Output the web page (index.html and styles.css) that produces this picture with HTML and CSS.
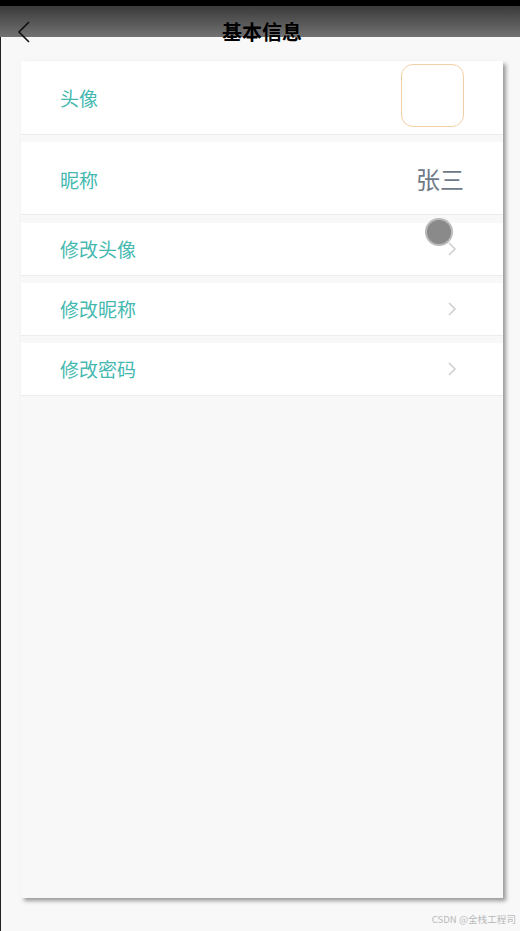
FILE: index.html
```html
<!DOCTYPE html>
<html>
<head>
<meta charset="utf-8" />
<title>基本信息</title>
<link rel="stylesheet" href="styles.css">
</head>
<body>
<div class="page">
    <div class="status"></div>
    <div class="header">
        <span class="back">
            <svg width="14" height="22" viewBox="0 0 14 22"><path d="M12 1 L2 11 L12 21" fill="none" stroke="#111" stroke-width="1.6"/></svg>
        </span>
        <h1 class="title">基本信息</h1>
    </div>
    <div class="main">
        <div class="card">
            <div class="row row-big">
                <span class="label">头像</span>
                <span class="avatar"></span>
            </div>
            <div class="row row-big">
                <span class="label">昵称</span>
                <span class="value">张三</span>
            </div>
            <div class="row">
                <span class="label">修改头像</span>
                <svg class="arrow" width="10" height="16" viewBox="0 0 10 16"><path d="M2 2 L8 8 L2 14" fill="none" stroke="#cfcfcf" stroke-width="1.6"/></svg>
            </div>
            <div class="row">
                <span class="label">修改昵称</span>
                <svg class="arrow" width="10" height="16" viewBox="0 0 10 16"><path d="M2 2 L8 8 L2 14" fill="none" stroke="#cfcfcf" stroke-width="1.6"/></svg>
            </div>
            <div class="row">
                <span class="label">修改密码</span>
                <svg class="arrow" width="10" height="16" viewBox="0 0 10 16"><path d="M2 2 L8 8 L2 14" fill="none" stroke="#cfcfcf" stroke-width="1.6"/></svg>
            </div>
        </div>
        <div class="mark">CSDN @全栈工程司</div>
    </div>
    <div class="float-ball"></div>
</div>
</body>
</html>
```

FILE: styles.css
```css
*{ margin:0; padding:0; box-sizing:border-box;}
body{ background:#f8f8f8; font-family:"Noto Sans CJK SC","Noto Sans",sans-serif;}
.page{ width:520px; height:931px; position:relative; overflow:hidden; background:#f8f8f8;}
.status{ height:6px; background:#000;}
.header{ height:31px; background:linear-gradient(#3a3a3a,#727272); display:flex; justify-content:center; position:relative;}
.back{ position:absolute; left:17px; top:15px; width:14px; height:22px;}
.back svg{ display:block;}
.title{ font-size:20px; font-weight:bold; color:#000; line-height:28px; margin:12px 0 0 4px; height:28px;}
.main{ height:894px; border-left:1px solid #222; padding:24px 17px 0 20px;}
.card{ height:837px; background:#f8f8f8; box-shadow:3px 3px 4px rgba(0,0,0,0.38);}
.row{ height:53px; background:#fff; border-bottom:1px solid #ececec; margin-bottom:7px; display:flex; align-items:center; justify-content:space-between; padding:0 46px 0 39px;}
.row-big{ height:74px; padding-right:39px;}
.row-big + .row-big{ height:73px; margin-bottom:8px;}
.row-big + .row-big .label{ margin-top:3px;}
.label{ font-size:19px; color:#45b8b0; line-height:24px;}
.avatar{ width:63px; height:63px; border:1px solid #f3cfa6; border-radius:12px; margin-bottom:4px;}
.value{ font-size:24px; color:#6e7a88; line-height:30px; margin-top:2px;}
.arrow{ display:block;}
.mark{ text-align:right; font-size:9.6px; color:#b8b8b8; padding:14px 0 0 0; margin-right:-13px; line-height:14px;}
.float-ball{ position:absolute; left:425px; top:218px; width:28px; height:28px; border-radius:50%; background:#8a8a8a; border:2px solid rgba(190,190,190,0.9);}
```
